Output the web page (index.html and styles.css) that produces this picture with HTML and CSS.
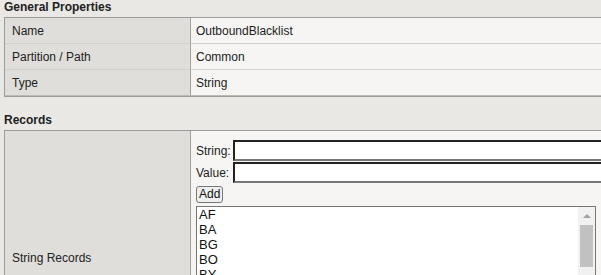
FILE: index.html
```html
<!DOCTYPE html>
<html lang="en">
<head>
    <meta charset="UTF-8">
    <meta name="viewport" content="width=device-width, initial-scale=1.0">
    <title>Data Group List</title>
    <link rel="stylesheet" href="styles.css">
</head>
<body>
    <h2 class="section-title">General Properties</h2>
    <table class="props">
        <tr>
            <td class="label">Name</td>
            <td class="value">OutboundBlacklist</td>
        </tr>
        <tr>
            <td class="label">Partition / Path</td>
            <td class="value">Common</td>
        </tr>
        <tr>
            <td class="label">Type</td>
            <td class="value">String</td>
        </tr>
    </table>

    <h2 class="section-title">Records</h2>
    <table class="props">
        <tr>
            <td class="label">String Records</td>
            <td class="value records">
                <div class="record-form">
                    <label for="rec-string">String:</label>
                    <input type="text" id="rec-string" class="field">
                    <label for="rec-value">Value:</label>
                    <input type="text" id="rec-value" class="field">
                </div>
                <button class="add">Add</button>
                <div class="listbox">
                    <ul class="options">
                        <li>AF</li>
                        <li>BA</li>
                        <li>BG</li>
                        <li>BO</li>
                        <li>BY</li>
                        <li>CD</li>
                        <li>CF</li>
                        <li>CU</li>
                        <li>IQ</li>
                        <li>IR</li>
                        <li>KP</li>
                    </ul>
                    <div class="scrollbar">
                        <div class="arrow"></div>
                        <div class="thumb"></div>
                    </div>
                </div>
            </td>
        </tr>
    </table>
</body>
</html>
```

FILE: styles.css
```css
html, body {
    overflow: hidden;
}

body {
    margin: 0;
    padding: 0 0 0 4px;
    background: #e9e8e4;
    color: #222;
    font-family: "Liberation Sans", Arial, sans-serif;
    font-size: 12px;
}

.section-title {
    margin: 0 0 3px;
    font-size: 12px;
    line-height: 14px;
    font-weight: bold;
}

.props {
    width: 640px;
    table-layout: fixed;
    border-spacing: 0;
    border-top: 1px solid #9c9c9c;
    border-left: 1px solid #9c9c9c;
    border-bottom: 1px solid #9c9c9c;
    margin-bottom: 16px;
}

.props td {
    height: 25px;
    padding: 0;
    border-bottom: 1px solid #d3d1cd;
    vertical-align: middle;
}

.props tr:last-child td {
    border-bottom-color: #bdbbb7;
}

.label {
    width: 178px;
    padding-left: 7px !important;
    background: #dfdedb;
    border-right: 1px solid #a2a2a2;
}

.value {
    padding-left: 5px !important;
    background: #f6f5f3;
}

.records {
    padding: 9px 0 9px 5px !important;
}

.record-form {
    display: grid;
    grid-template-columns: 37px 420px;
    row-gap: 1px;
    align-items: center;
}

.field {
    box-sizing: border-box;
    height: 21px;
    margin: 0;
    padding: 0 2px;
    background: #fff;
    border-style: solid;
    border-width: 2px;
    border-color: #222 #777 #777 #222;
    font: inherit;
}

.add {
    display: block;
    height: 17px;
    margin: 3px 0 0;
    padding: 0 2px;
    background: #efefef;
    border: 1px solid #777;
    border-radius: 3px;
    color: #111;
    font: 12px/15px "Liberation Sans", Arial, sans-serif;
}

.listbox {
    display: flex;
    box-sizing: border-box;
    width: 400px;
    height: 170px;
    margin-top: 3px;
    background: #fff;
    border: 1px solid #767676;
    overflow: hidden;
}

.options {
    flex: 1;
    margin: 0;
    padding: 0 0 0 2px;
    list-style: none;
    font-size: 13px;
    line-height: 15px;
    color: #111;
}

.scrollbar {
    width: 17px;
    background: #f1f1f1;
}

.arrow {
    width: 0;
    height: 0;
    margin: 7px auto 7px;
    border-left: 4px solid transparent;
    border-right: 4px solid transparent;
    border-bottom: 4px solid #a3a3a3;
}

.thumb {
    width: 13px;
    height: 42px;
    margin: 0 auto;
    background: #c1c1c1;
}
```
